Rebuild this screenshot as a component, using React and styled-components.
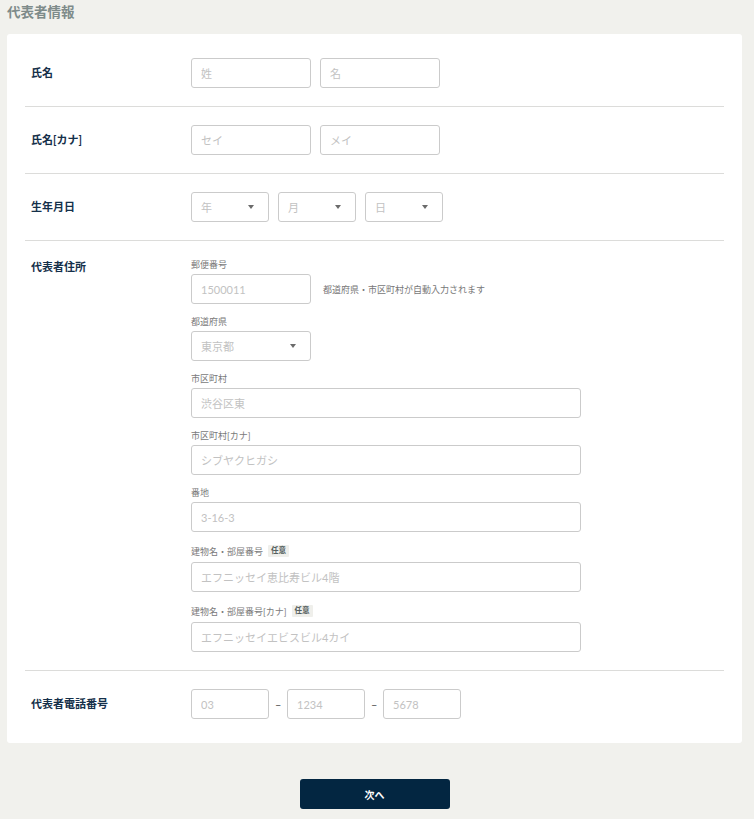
import React from 'react'
import styled, { createGlobalStyle } from 'styled-components'

const GlobalStyle = createGlobalStyle`
  html, body {
    margin: 0;
    background: #f1f1ed;
    font-family: Lato, "Noto Sans CJK JP", sans-serif;
  }
  * { box-sizing: border-box; }
`

const Page = styled.div`
  padding: 0 12px 10px 7px;
`

const Title = styled.h2`
  margin: 0;
  height: 34px;
  padding-top: 3px;
  font-size: 13.5px;
  font-weight: 700;
  line-height: 18px;
  color: #7e8b8a;
`

const Card = styled.div`
  background: #fff;
  border-radius: 3px;
  padding: 6px 18px;
`

const Row = styled.div`
  display: grid;
  grid-template-columns: 160px 1fr;
  align-items: ${p => (p.$top ? 'start' : 'center')};
  padding: 18px 6px;
  border-bottom: 1px solid #dcdcda;
  &:last-child { border-bottom: none; }
`

const Label = styled.div`
  font-size: 11px;
  font-weight: 700;
  color: #15304a;
  line-height: 14px;
  padding-top: ${p => (p.$top ? '1px' : '0')};
`

const Inline = styled.div`
  display: flex;
  align-items: center;
  gap: ${p => p.$gap || 9}px;
`

const Input = styled.input`
  width: ${p => p.$w || 120}px;
  height: 30px;
  border: 1px solid #cbcbcb;
  border-radius: 3px;
  padding: 0 9px;
  font-family: Lato, "Noto Sans CJK JP", sans-serif;
  font-size: 11px;
  color: #333;
  background: #fff;
  outline: none;
  &::placeholder { color: #c2c2c2; }
`

const Select = styled.div`
  width: ${p => p.$w || 78}px;
  height: 30px;
  border: 1px solid #cbcbcb;
  border-radius: 3px;
  padding: 0 14px 0 9px;
  display: flex;
  align-items: center;
  justify-content: space-between;
  font-size: 11px;
  color: #c2c2c2;
  background: #fff;
`

const Caret = styled.span`
  width: 0;
  height: 0;
  border-left: 3.5px solid transparent;
  border-right: 3.5px solid transparent;
  border-top: 4px solid #6b6b6b;
`

const Dash = styled.span`
  width: 6px;
  text-align: center;
  font-size: 11px;
  color: #555;
`

const Fields = styled.div`
  display: flex;
  flex-direction: column;
  gap: 12px;
`

const Field = styled.div`
  display: flex;
  flex-direction: column;
`

const SubLabel = styled.div`
  display: flex;
  align-items: center;
  gap: 5px;
  min-height: ${p => (p.$badge ? 14 : 11)}px;
  margin-bottom: 4px;
  font-size: 9px;
  line-height: 11px;
  color: #7a7a7a;
`

const Badge = styled.span`
  background: #efefeb;
  color: #555f5f;
  font-size: 7.5px;
  font-weight: 700;
  padding: 1px 3px;
  line-height: 10px;
  border-radius: 1px;
`

const Help = styled.span`
  font-size: 9px;
  color: #777;
  margin-left: 3px;
`

const Footer = styled.div`
  display: flex;
  justify-content: center;
  padding-top: 36px;
`

const Button = styled.button`
  width: 150px;
  height: 30px;
  border: none;
  border-radius: 3px;
  background: #032641;
  color: #fff;
  font-family: Lato, "Noto Sans CJK JP", sans-serif;
  font-size: 10px;
  font-weight: 700;
`

const AddrField = ({ label, badge, placeholder }) => (
  <Field>
    <SubLabel $badge={badge}>
      {label}
      {badge && <Badge>任意</Badge>}
    </SubLabel>
    <Input $w={390} placeholder={placeholder} />
  </Field>
)

export default function App() {
  return (
    <Page>
      <GlobalStyle />
      <Title>代表者情報</Title>
      <Card>
        <Row>
          <Label>氏名</Label>
          <Inline>
            <Input placeholder="姓" />
            <Input placeholder="名" />
          </Inline>
        </Row>
        <Row>
          <Label>氏名[カナ]</Label>
          <Inline>
            <Input placeholder="セイ" />
            <Input placeholder="メイ" />
          </Inline>
        </Row>
        <Row>
          <Label>生年月日</Label>
          <Inline>
            <Select>年<Caret /></Select>
            <Select>月<Caret /></Select>
            <Select>日<Caret /></Select>
          </Inline>
        </Row>
        <Row $top>
          <Label $top>代表者住所</Label>
          <Fields>
            <Field>
              <SubLabel>郵便番号</SubLabel>
              <Inline>
                <Input placeholder="1500011" />
                <Help>都道府県・市区町村が自動入力されます</Help>
              </Inline>
            </Field>
            <Field>
              <SubLabel>都道府県</SubLabel>
              <Select $w={120}>東京都<Caret /></Select>
            </Field>
            <AddrField label="市区町村" placeholder="渋谷区東" />
            <AddrField label="市区町村[カナ]" placeholder="シブヤクヒガシ" />
            <AddrField label="番地" placeholder="3-16-3" />
            <AddrField label="建物名・部屋番号" badge placeholder="エフニッセイ恵比寿ビル4階" />
            <AddrField label="建物名・部屋番号[カナ]" badge placeholder="エフニッセイエビスビル4カイ" />
          </Fields>
        </Row>
        <Row>
          <Label>代表者電話番号</Label>
          <Inline $gap={6}>
            <Input $w={78} placeholder="03" />
            <Dash>–</Dash>
            <Input $w={78} placeholder="1234" />
            <Dash>–</Dash>
            <Input $w={78} placeholder="5678" />
          </Inline>
        </Row>
      </Card>
      <Footer>
        <Button>次へ</Button>
      </Footer>
    </Page>
  )
}
